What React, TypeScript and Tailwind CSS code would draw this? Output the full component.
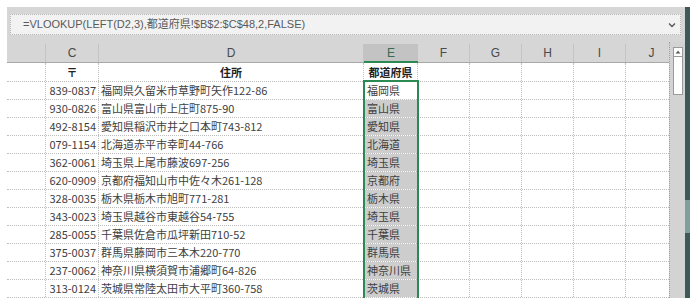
import React from "react";

const rows: [string, string, string][] = [
  ["839-0837", "福岡県久留米市草野町矢作122-86", "福岡県"],
  ["930-0826", "富山県富山市上庄町875-90", "富山県"],
  ["492-8154", "愛知県稲沢市井之口本町743-812", "愛知県"],
  ["079-1154", "北海道赤平市幸町44-766", "北海道"],
  ["362-0061", "埼玉県上尾市藤波697-256", "埼玉県"],
  ["620-0909", "京都府福知山市中佐々木261-128", "京都府"],
  ["328-0035", "栃木県栃木市旭町771-281", "栃木県"],
  ["343-0023", "埼玉県越谷市東越谷54-755", "埼玉県"],
  ["285-0055", "千葉県佐倉市瓜坪新田710-52", "千葉県"],
  ["375-0037", "群馬県藤岡市三本木220-770", "群馬県"],
  ["237-0062", "神奈川県横須賀市浦郷町64-826", "神奈川県"],
  ["313-0124", "茨城県常陸太田市大平町360-758", "茨城県"],
];

const cellFont = { fontFamily: '"Noto Sans CJK JP", "Noto Sans", sans-serif' };

function EmptyCells() {
  return (
    <>
      <div className="w-[52px] shrink-0 h-full border-r border-dotted border-[#bdbdbd]" />
      <div className="w-[52px] shrink-0 h-full border-r border-dotted border-[#bdbdbd]" />
      <div className="w-[52px] shrink-0 h-full border-r border-dotted border-[#bdbdbd]" />
      <div className="w-[52px] shrink-0 h-full border-r border-dotted border-[#bdbdbd]" />
      <div className="w-[52px] shrink-0 h-full border-r border-dotted border-[#bdbdbd]" />
    </>
  );
}

export default function App() {
  return (
    <div className="w-[698px] h-[304px] bg-white pt-[7px] pl-[7px] flex overflow-hidden">
      <div className="w-[678px] flex flex-col">
        {/* formula bar area */}
        <div className="h-[35px] bg-[#d6d6d6] pt-[7px] pl-[3px]">
          <div
            className="w-[671px] h-[21px] bg-[#f2f2f2] border border-dotted border-[#b5b5b5] flex items-center justify-between pl-[12px] pr-[4px] text-[11px] text-[#5a5a5a]"
            style={{ fontFamily: '"Liberation Sans", "Noto Sans CJK JP", sans-serif' }}
          >
            <span>=VLOOKUP(LEFT(D2,3),都道府県!$B$2:$C$48,2,FALSE)</span>
            <svg width="8" height="6" viewBox="0 0 8 6">
              <path d="M1 1.5 L4 4.5 L7 1.5" stroke="#555" strokeWidth="1.3" fill="none" />
            </svg>
          </div>
        </div>
        <div className="flex">
          {/* grid */}
          <div className="w-[662px] overflow-hidden relative">
            <div className="w-[760px]">
              {/* column headers */}
              <div
                className="h-[21px] flex bg-[#d6d6d6] border-b border-[#a8a8a8] text-[12px] text-[#4a4a4a]"
                style={{ fontFamily: '"Liberation Sans", sans-serif' }}
              >
                <div className="w-[39px] shrink-0 border-r border-[#c4c4c4] mt-[2px]" />
                <div className="w-[53px] shrink-0 border-r border-[#c4c4c4] mt-[2px] flex items-center justify-center">C</div>
                <div className="w-[265px] shrink-0 border-r border-[#c4c4c4] mt-[2px] flex items-center justify-center">D</div>
                <div className="w-[54px] shrink-0 bg-[#c3c3c3] border-b-2 border-[#2b8a52] mt-[2px] -mb-px flex items-center justify-center text-[#3c6a4e]">E</div>
                <div className="w-[52px] shrink-0 border-r border-[#c4c4c4] mt-[2px] flex items-center justify-center">F</div>
                <div className="w-[52px] shrink-0 border-r border-[#c4c4c4] mt-[2px] flex items-center justify-center">G</div>
                <div className="w-[52px] shrink-0 border-r border-[#c4c4c4] mt-[2px] flex items-center justify-center">H</div>
                <div className="w-[52px] shrink-0 border-r border-[#c4c4c4] mt-[2px] flex items-center justify-center">I</div>
                <div className="w-[52px] shrink-0 border-r border-[#c4c4c4] mt-[2px] flex items-center justify-center">J</div>
              </div>
              {/* row 1 */}
              <div className="h-[19px] flex border-b border-dotted border-[#bdbdbd] text-[11px] font-bold text-[#222]" style={cellFont}>
                <div className="w-[39px] shrink-0 h-full border-r border-dotted border-[#bdbdbd]" />
                <div className="w-[53px] shrink-0 h-full border-r border-dotted border-[#bdbdbd] flex items-center justify-center">〒</div>
                <div className="w-[265px] shrink-0 h-full border-r border-dotted border-[#bdbdbd] flex items-center justify-center">住所</div>
                <div className="w-[54px] shrink-0 h-full border-r border-dotted border-[#bdbdbd] flex items-center justify-center">都道府県</div>
                <EmptyCells />
              </div>
              {rows.map(([zip, addr, pref], i) => (
                <div key={zip} className="h-[18px] flex border-b border-dotted border-[#bdbdbd] text-[11px] text-[#404040]" style={cellFont}>
                  <div className="w-[39px] shrink-0 h-full border-r border-dotted border-[#bdbdbd]" />
                  <div className="w-[53px] shrink-0 h-full border-r border-dotted border-[#bdbdbd] flex items-center justify-end pr-[2px]">{zip}</div>
                  <div className="w-[265px] shrink-0 h-full border-r border-dotted border-[#bdbdbd] flex items-center pl-[2px] whitespace-nowrap">{addr}</div>
                  <div className={`w-[54px] shrink-0 h-full border-r border-dotted border-[#bdbdbd] flex items-center pl-[3px] whitespace-nowrap ${i === 0 ? "bg-white" : "bg-[#cdcdcd]"}`}>{pref}</div>
                  <EmptyCells />
                </div>
              ))}
            </div>
            {/* selection border */}
            <div className="absolute left-[356px] top-[38px] w-[56px] h-[230px] border-2 border-b-0 border-[#2b8a52] pointer-events-none" />
          </div>
          {/* scrollbar */}
          <div className="w-[16px] h-[256px] bg-[#d3d3d3] border-l border-dotted border-[#a0a0a0] pl-[3px] pt-[5px] flex flex-col">
            <div className="w-[10px] h-[10px] bg-white border border-[#9a9a9a] flex items-center justify-center">
              <svg width="6" height="4" viewBox="0 0 6 4">
                <path d="M0.5 3.5 L3 0.8 L5.5 3.5 Z" fill="#555" />
              </svg>
            </div>
            <div className="w-[10px] h-[38px] bg-white border border-t-0 border-[#9a9a9a]" />
          </div>
        </div>
      </div>
      {/* dark strip */}
      <div className="w-[5px] h-[291px] bg-[#3f5858] flex flex-col">
        <div className="h-[193px]" />
        <div className="h-[33px] bg-[#7f9e9e]" />
      </div>
    </div>
  );
}
